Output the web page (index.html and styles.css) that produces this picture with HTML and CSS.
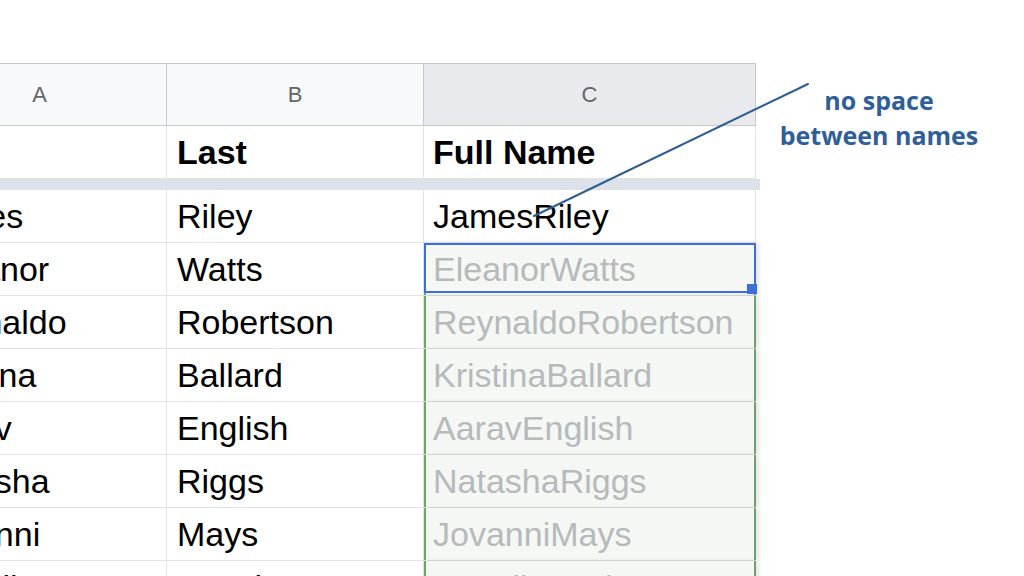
FILE: index.html
```html
<!DOCTYPE html>
<html lang="en">
<head>
<meta charset="utf-8">
<title>Full Name</title>
<link rel="stylesheet" href="styles.css">
</head>
<body>
<div class="canvas">
  <div class="sheet">
    <div class="row head">
      <div class="hdr">A</div>
      <div class="hdr">B</div>
      <div class="hdr sel">C</div>
    </div>
    <div class="row title">
      <div class="cell"></div>
      <div class="cell bold">Last</div>
      <div class="cell bold">Full Name</div>
    </div>
    <div class="freeze"></div>
    <div class="row">
      <div class="cell">James</div>
      <div class="cell">Riley</div>
      <div class="cell">JamesRiley</div>
    </div>
    <div class="row">
      <div class="cell shift">Eleanor</div>
      <div class="cell">Watts</div>
      <div class="cell sug active">EleanorWatts</div>
    </div>
    <div class="row">
      <div class="cell">Reynaldo</div>
      <div class="cell">Robertson</div>
      <div class="cell sug">ReynaldoRobertson</div>
    </div>
    <div class="row">
      <div class="cell">Kristina</div>
      <div class="cell">Ballard</div>
      <div class="cell sug">KristinaBallard</div>
    </div>
    <div class="row">
      <div class="cell">Aarav</div>
      <div class="cell">English</div>
      <div class="cell sug">AaravEnglish</div>
    </div>
    <div class="row">
      <div class="cell">Natasha</div>
      <div class="cell">Riggs</div>
      <div class="cell sug">NatashaRiggs</div>
    </div>
    <div class="row">
      <div class="cell">Jovanni</div>
      <div class="cell">Mays</div>
      <div class="cell sug">JovanniMays</div>
    </div>
    <div class="row">
      <div class="cell">Anneli</div>
      <div class="cell">Murphy</div>
      <div class="cell sug">AnneliMurphy</div>
    </div>
  </div>
  <div class="note">no space<br>between names</div>
  <svg class="pointer" width="1024" height="576" viewBox="0 0 1024 576">
    <line x1="808" y1="84" x2="534" y2="216" stroke="#2d5b93" stroke-width="2" stroke-linecap="round"/>
  </svg>
</div>
</body>
</html>
```

FILE: styles.css
```css
html, body {
  margin: 0;
  padding: 0;
  background: #ffffff;
}

body {
  font-family: "Liberation Sans", Arial, Helvetica, sans-serif;
  color: #000;
}

.canvas {
  position: relative;
  width: 1024px;
  height: 576px;
  overflow: hidden;
  background: #fff;
}

.sheet {
  margin-left: -87px;
  padding-top: 63px;
  width: 843px;
}

.row {
  display: grid;
  grid-template-columns: 254px 257px 332px;
  height: 53px;
  box-sizing: border-box;
  border-bottom: 1px solid #e2e3e3;
}

.row.head {
  height: 63px;
  background: #f8f9fa;
  border-top: 1px solid #c6c8ca;
  border-bottom: 1px solid #c6c8ca;
}

.hdr {
  display: flex;
  align-items: center;
  justify-content: center;
  font-size: 22px;
  color: #62666a;
  border-right: 1px solid #c6c8ca;
}

.hdr.sel {
  background: #e8eaed;
}

.cell {
  display: flex;
  align-items: center;
  padding: 1px 0 0 10px;
  box-sizing: border-box;
  font-size: 34px;
  white-space: nowrap;
  overflow: hidden;
  border-right: 1px solid #e2e3e3;
}

.cell.shift {
  padding-left: 19px;
}

.row .cell:nth-child(3) {
  padding-left: 9px;
}

.bold {
  font-weight: bold;
}

.freeze {
  height: 11px;
  width: 847px;
  background: #dde1e9;
}

.cell.sug {
  background: #f4f7f4;
  color: #b6babb;
  border-right: 2px solid #6ca46b;
  box-shadow: inset 2px 0 0 #6ca46b, 3px 0 4px rgba(0, 0, 0, 0.10);
  overflow: visible;
  position: relative;
}

.cell.active::after {
  content: "";
  position: absolute;
  left: 0;
  top: 0;
  right: -2px;
  bottom: 2px;
  border: 2px solid #3e6fd9;
}

.cell.active::before {
  content: "";
  position: absolute;
  right: -3px;
  bottom: 1px;
  width: 10px;
  height: 10px;
  background: #3e6fd9;
  z-index: 2;
}

.note {
  position: absolute;
  left: 778px;
  top: 83px;
  width: 202px;
  text-align: center;
  font-family: "Open Sans", "Noto Sans", sans-serif;
  font-weight: 700;
  font-size: 25px;
  line-height: 35px;
  color: #2f5e98;
}

.pointer {
  position: absolute;
  left: 0;
  top: 0;
  pointer-events: none;
}
```
